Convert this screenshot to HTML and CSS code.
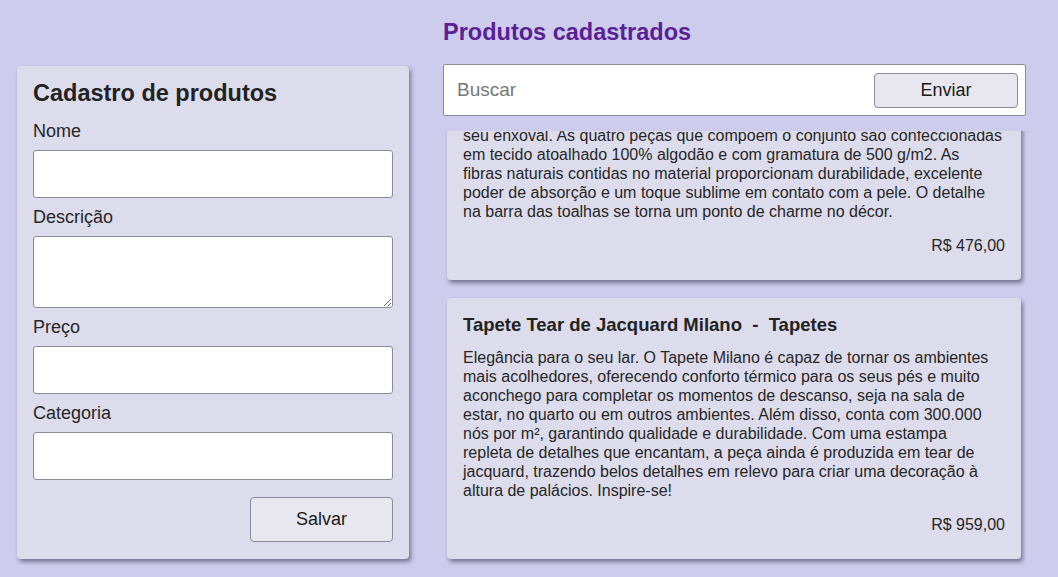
FILE: index.html
```html
<!DOCTYPE html>
<html lang="pt-BR">
<head>
<meta charset="utf-8">
<title>Produtos</title>
<link rel="stylesheet" href="styles.css">
</head>
<body>
<main class="page">
  <section class="form-card">
    <h1 class="form-title">Cadastro de produtos</h1>
    <form class="form">
      <label class="field-label" for="nome">Nome</label>
      <input class="field" id="nome" type="text">
      <label class="field-label" for="descricao">Descrição</label>
      <textarea class="field field-area" id="descricao"></textarea>
      <label class="field-label" for="preco">Preço</label>
      <input class="field" id="preco" type="text">
      <label class="field-label" for="categoria">Categoria</label>
      <input class="field" id="categoria" type="text">
      <button class="btn btn-save" type="button">Salvar</button>
    </form>
  </section>

  <section class="products">
    <h2 class="products-title">Produtos cadastrados</h2>
    <form class="search">
      <input class="search-input" type="text" placeholder="Buscar">
      <button class="btn btn-send" type="button">Enviar</button>
    </form>
    <div class="list">
      <article class="product product-scrolled">
        <p class="product-desc">seu enxoval. As quatro peças que compõem o conjunto são confeccionadas<br>em tecido atoalhado 100% algodão e com gramatura de 500 g/m2. As<br>fibras naturais contidas no material proporcionam durabilidade, excelente<br>poder de absorção e um toque sublime em contato com a pele. O detalhe<br>na barra das toalhas se torna um ponto de charme no décor.</p>
        <p class="product-price">R$ 476,00</p>
      </article>
      <article class="product">
        <h3 class="product-name">Tapete Tear de Jacquard Milano&nbsp; - &nbsp;Tapetes</h3>
        <p class="product-desc">Elegância para o seu lar. O Tapete Milano é capaz de tornar os ambientes<br>mais acolhedores, oferecendo conforto térmico para os seus pés e muito<br>aconchego para completar os momentos de descanso, seja na sala de<br>estar, no quarto ou em outros ambientes. Além disso, conta com 300.000<br>nós por m², garantindo qualidade e durabilidade. Com uma estampa<br>repleta de detalhes que encantam, a peça ainda é produzida em tear de<br>jacquard, trazendo belos detalhes em relevo para criar uma decoração à<br>altura de palácios. Inspire-se!</p>
        <p class="product-price">R$ 959,00</p>
      </article>
    </div>
  </section>
</main>
</body>
</html>
```
FILE: styles.css
```css
* { box-sizing: border-box; }

html, body {
  margin: 0;
  height: 577px;
  overflow: hidden;
}

body {
  background: #cdcced;
  font-family: "Liberation Sans", Arial, sans-serif;
  color: #232323;
}

.page {
  display: grid;
  grid-template-columns: 392px 583px;
  column-gap: 34px;
  padding-left: 17px;
  height: 577px;
}

/* ---------- left form card ---------- */
.form-card {
  align-self: start;
  margin-top: 66px;
  background: #dddcec;
  border-radius: 4px;
  padding: 16px 16px 17px;
  box-shadow: 2px 3px 4px rgba(50, 50, 70, 0.55);
}

.form-title {
  margin: 0 0 16px;
  font-size: 23.5px;
  line-height: 22px;
  font-weight: bold;
  color: #222;
}

.form {
  display: flex;
  flex-direction: column;
  gap: 8px;
}

.field-label {
  font-size: 18px;
  line-height: 22px;
  color: #262626;
}

.field {
  display: block;
  width: 100%;
  height: 48px;
  margin: 0;
  background: #fff;
  border: 1px solid #8b8a9a;
  border-radius: 3px;
  font-family: inherit;
  font-size: 16px;
  padding: 0 10px;
}

.field-area {
  height: 72px;
  resize: vertical;
}

.btn {
  font-family: inherit;
  color: #1a1a1a;
  background: #e8e7f0;
  border: 1px solid #8c8b98;
  border-radius: 4px;
  cursor: pointer;
}

.btn-save {
  align-self: flex-end;
  width: 143px;
  height: 45px;
  margin-top: 9px;
  font-size: 18px;
}

/* ---------- right products column ---------- */
.products {
  display: flex;
  flex-direction: column;
  height: 577px;
  min-height: 0;
}

.products-title {
  margin: 18px 0 18px;
  font-size: 23.5px;
  line-height: 28px;
  font-weight: bold;
  color: #5a1f95;
}

.search {
  display: flex;
  align-items: center;
  height: 52px;
  flex-shrink: 0;
  padding: 0 7px 0 13px;
  background: #fff;
  border: 1px solid #8b8a9a;
  border-radius: 2px;
  margin: 0;
}

.search-input {
  flex: 1;
  min-width: 0;
  border: 0;
  outline: none;
  background: transparent;
  font-family: inherit;
  font-size: 19px;
  color: #222;
  padding: 0;
}

.search-input::placeholder {
  color: #777;
}

.btn-send {
  width: 144px;
  height: 35px;
  font-size: 18px;
}

/* list is scrolled to its end: overflow is clipped at the top */
.list {
  flex: 1;
  min-height: 0;
  margin-top: 15px;
  overflow: hidden;
  display: flex;
  flex-direction: column;
  justify-content: flex-end;
  gap: 18px;
  padding: 0 5px 18px 4px;
}

.product {
  flex-shrink: 0;
  background: #dddcec;
  border-radius: 4px;
  padding: 16px 16px 25px;
  box-shadow: 2px 3px 4px rgba(50, 50, 70, 0.55);
}

.product-name {
  margin: 0 0 12px;
  font-size: 18.5px;
  line-height: 22px;
  font-weight: bold;
  color: #222;
}

.product-desc {
  margin: 0;
  font-size: 16px;
  line-height: 19px;
  color: #262626;
}

.product-price {
  margin: 15px 0 0;
  text-align: right;
  font-size: 16px;
  line-height: 19px;
  color: #262626;
}
```
